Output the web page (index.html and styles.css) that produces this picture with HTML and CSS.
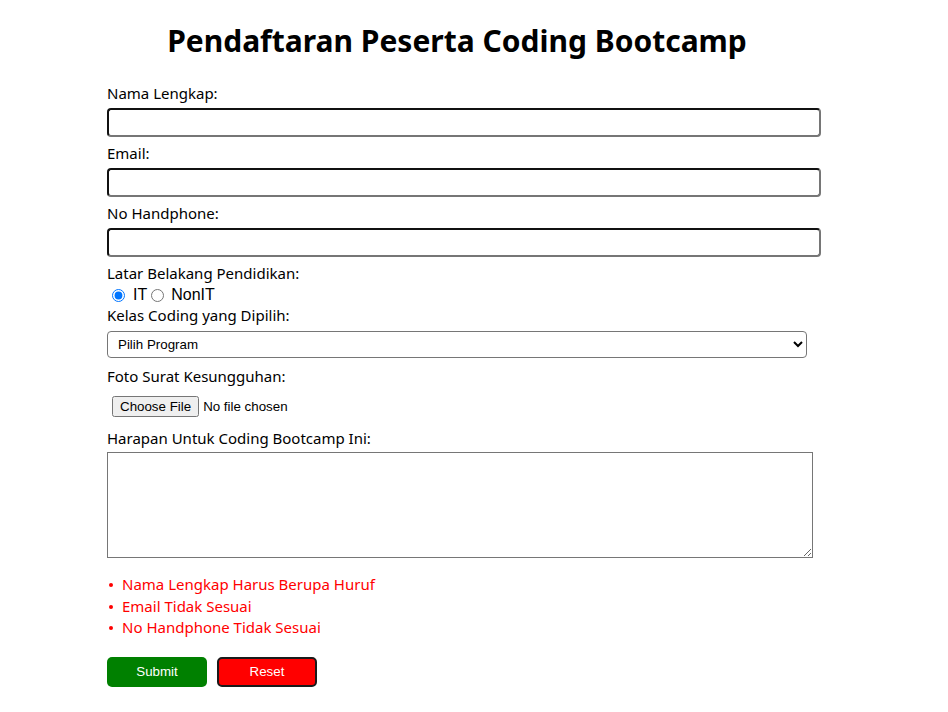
FILE: index.html
```html
<!DOCTYPE html>
<html lang="id">
<head>
<meta charset="utf-8">
<title>Pendaftaran Peserta Coding Bootcamp</title>
<link rel="stylesheet" href="styles.css">
</head>
<body>
<div class="container">
  <h1 class="title">Pendaftaran Peserta Coding Bootcamp</h1>
  <form class="form">
    <label class="label" for="nama">Nama Lengkap:</label>
    <input class="text-input" type="text" id="nama">
    <label class="label" for="email">Email:</label>
    <input class="text-input" type="text" id="email">
    <label class="label" for="hp">No Handphone:</label>
    <input class="text-input" type="text" id="hp">
    <label class="label">Latar Belakang Pendidikan:</label>
    <div class="radio-row">
      <input class="radio" type="radio" name="latar" id="it" checked><label class="radio-label" for="it">IT</label>
      <input class="radio radio-second" type="radio" name="latar" id="nonit"><label class="radio-label radio-label-second" for="nonit">NonIT</label>
    </div>
    <label class="label" for="kelas">Kelas Coding yang Dipilih:</label>
    <select class="select" id="kelas">
      <option>Pilih Program</option>
    </select>
    <label class="label label-file" for="foto">Foto Surat Kesungguhan:</label>
    <div class="file-row"><input class="file" type="file" id="foto"></div>
    <label class="label" for="harapan">Harapan Untuk Coding Bootcamp Ini:</label>
    <textarea class="textarea" id="harapan"></textarea>
    <ul class="errors">
      <li class="error">Nama Lengkap Harus Berupa Huruf</li>
      <li class="error">Email Tidak Sesuai</li>
      <li class="error">No Handphone Tidak Sesuai</li>
    </ul>
    <div class="buttons">
      <button type="button" class="btn btn-submit">Submit</button>
      <button type="button" class="btn btn-reset">Reset</button>
    </div>
  </form>
</div>
</body>
</html>
```

FILE: styles.css
```css
html, body {
  margin: 0;
  padding: 0;
  background: #fff;
}

body {
  font-family: "Noto Sans", "Open Sans", sans-serif;
  font-size: 15px;
  color: #000;
}

.container {
  width: 700px;
  margin-left: 107px;
  padding-top: 19px;
}

.title {
  margin: 0 0 21px 0;
  font-size: 30px;
  line-height: 43px;
  font-weight: 700;
  text-align: center;
}

.form {
  display: flex;
  flex-direction: column;
  align-items: flex-start;
}

.label {
  display: block;
  line-height: 21px;
  height: 21px;
  margin-bottom: 4px;
}

.text-input {
  box-sizing: content-box;
  width: 700px;
  height: 15px;
  padding: 5px;
  margin: 0 0 6px 0;
  border: 2px solid;
  border-color: #111 #767676 #767676 #111;
  border-radius: 4px;
  font-family: "Liberation Sans", Arial, sans-serif;
  font-size: 13.33px;
  outline: none;
}

.radio-row {
  display: flex;
  align-items: center;
  height: 21px;
  margin-top: -4px;
  font-family: "Liberation Sans", Arial, sans-serif;
  font-size: 16px;
}

.radio {
  width: 13px;
  height: 13px;
  margin: 1px 0 0 5px;
}

.radio-second {
  margin-left: 4px;
}

.radio-label {
  line-height: 21px;
  margin-left: 8px;
}

.radio-label-second {
  margin-left: 7px;
}

.select {
  box-sizing: border-box;
  width: 700px;
  height: 27px;
  margin: 1px 0 8px 0;
  padding: 0 6px;
  border: 1px solid #767676;
  border-radius: 4px;
  background: #fff;
  font-family: "Liberation Sans", Arial, sans-serif;
  font-size: 13.33px;
  color: #000;
}

.file-row {
  height: 29px;
  display: flex;
  align-items: center;
  margin-top: 1px;
  margin-bottom: 7px;
}

.file {
  margin-left: 5px;
  font-family: "Liberation Sans", Arial, sans-serif;
  font-size: 13.33px;
}

.textarea {
  box-sizing: content-box;
  width: 700px;
  height: 100px;
  padding: 2px;
  margin: -1px 0 0 0;
  border: 1px solid #767676;
  border-radius: 0;
  font-family: "Liberation Mono", monospace;
  font-size: 13.33px;
}

.errors {
  margin: 16px 0 0 0;
  padding: 0;
  list-style: none;
  color: #ff0000;
  line-height: 21.5px;
}

.error {
  display: flex;
  align-items: center;
}

.error::before {
  content: "";
  width: 4px;
  height: 4px;
  border-radius: 50%;
  background: #ff0000;
  margin: 1px 9px 0 2px;
}

.buttons {
  display: flex;
  gap: 10px;
  margin-top: 18px;
}

.btn {
  box-sizing: border-box;
  width: 100px;
  height: 30px;
  border-radius: 5px;
  color: #fff;
  font-family: "Liberation Sans", Arial, sans-serif;
  font-size: 13.33px;
  cursor: pointer;
}

.btn-submit {
  background: #008000;
  border: none;
}

.btn-reset {
  background: #ff0000;
  border: 2px solid #1a1a1a;
}
```
